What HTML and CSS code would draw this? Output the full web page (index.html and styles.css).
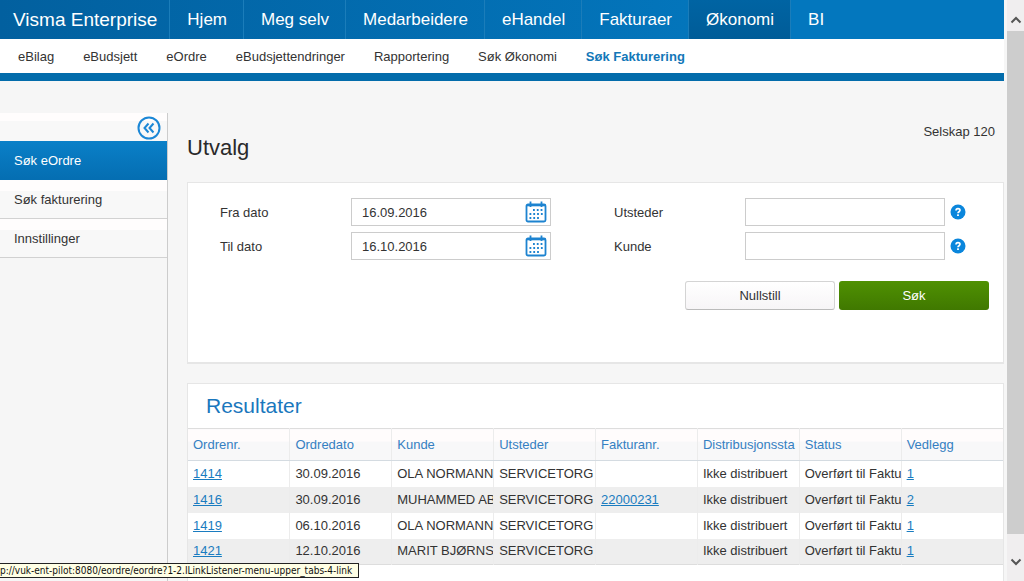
FILE: index.html
```html
<!DOCTYPE html>
<html lang="no">
<head>
<meta charset="utf-8">
<meta name="viewport" content="width=device-width, initial-scale=1">
<title>Visma Enterprise</title>
<link rel="stylesheet" href="styles.css">
</head>
<body>
<svg class="sprite" aria-hidden="true">
  <symbol id="calendar" viewBox="0 0 22 22">
    <rect x="1.500" y="3.500" width="19" height="17" rx="1.500" fill="none" stroke="currentColor" stroke-width="1.800"/>
    <path d="M1.500 4.500H20.500" stroke="currentColor" stroke-width="1.600"/>
    <path d="M5.500 0.500V6M16.500 0.500V6" stroke="currentColor" stroke-width="1.800"/>
    <path d="M8 9H18M4.500 13H18M4.500 17H14.500" stroke="currentColor" stroke-width="1.800" stroke-dasharray="1.800 2"/>
  </symbol>
  <symbol id="help" viewBox="0 0 16 16">
    <circle cx="8" cy="8" r="7.500" fill="#0a86dc"/>
    <path d="M6 6.600C6 4 10 4 10 6.300C10 7.800 8 7.600 8 9.300" fill="none" stroke="#fff" stroke-width="1.700"/>
    <rect x="7.100" y="10.300" width="1.800" height="1.700" fill="#fff"/>
  </symbol>
</svg>
<div class="window">
  <div class="page">
    <header>
      <nav class="topnav">
        <a class="brand" href="#">Visma Enterprise</a>
        <a href="#">Hjem</a>
        <a href="#">Meg selv</a>
        <a href="#">Medarbeidere</a>
        <a href="#">eHandel</a>
        <a href="#">Fakturaer</a>
        <a class="current" href="#">Økonomi</a>
        <a class="last" href="#">BI</a>
      </nav>
      <nav class="subnav">
        <a href="#">eBilag</a>
        <a href="#">eBudsjett</a>
        <a href="#">eOrdre</a>
        <a href="#">eBudsjettendringer</a>
        <a href="#">Rapportering</a>
        <a href="#">Søk Økonomi</a>
        <a class="current" href="#">Søk Fakturering</a>
      </nav>
    </header>
    <div class="body">
      <aside class="sidebar">
        <div class="collapse">
          <button type="button" aria-label="Skjul meny">
            <svg viewBox="0 0 24 24" fill="none" stroke="#1b87d6" stroke-width="2">
              <circle cx="12" cy="12" r="10.500"/>
              <path d="M11.500 7.500L7.500 12L11.500 16.500M16.500 7.500L12.500 12L16.500 16.500"/>
            </svg>
          </button>
        </div>
        <a class="current" href="#">Søk eOrdre</a>
        <a href="#">Søk fakturering</a>
        <a href="#">Innstillinger</a>
      </aside>
      <main>
        <p class="company">Selskap 120</p>
        <h1>Utvalg</h1>
        <form class="panel filter">
          <div class="fields">
            <div class="column">
              <div class="field">
                <label for="from">Fra dato</label>
                <div class="date"><input id="from" type="text" value="16.09.2016"><button type="button" aria-label="Velg fra dato"><svg><use href="#calendar"/></svg></button></div>
              </div>
              <div class="field">
                <label for="to">Til dato</label>
                <div class="date"><input id="to" type="text" value="16.10.2016"><button type="button" aria-label="Velg til dato"><svg><use href="#calendar"/></svg></button></div>
              </div>
            </div>
            <div class="column">
              <div class="field">
                <label for="issuer">Utsteder</label>
                <input class="text" id="issuer" type="text">
                <button class="help" type="button" aria-label="Hjelp om utsteder"><svg><use href="#help"/></svg></button>
              </div>
              <div class="field">
                <label for="customer">Kunde</label>
                <input class="text" id="customer" type="text">
                <button class="help" type="button" aria-label="Hjelp om kunde"><svg><use href="#help"/></svg></button>
              </div>
            </div>
          </div>
          <div class="actions">
            <button class="reset" type="reset">Nullstill</button>
            <button class="search" type="submit">Søk</button>
          </div>
        </form>
        <section class="panel results">
          <h2>Resultater</h2>
          <table>
            <thead>
              <tr><th>Ordrenr.</th><th>Ordredato</th><th>Kunde</th><th>Utsteder</th><th>Fakturanr.</th><th>Distribusjonssta</th><th>Status</th><th>Vedlegg</th></tr>
            </thead>
            <tbody>
              <tr><td><a href="#">1414</a></td><td>30.09.2016</td><td>OLA NORMANN</td><td>SERVICETORG</td><td></td><td>Ikke distribuert</td><td>Overført til Faktu</td><td><a href="#">1</a></td></tr>
              <tr><td><a href="#">1416</a></td><td>30.09.2016</td><td>MUHAMMED AB</td><td>SERVICETORG</td><td><a href="#">22000231</a></td><td>Ikke distribuert</td><td>Overført til Faktu</td><td><a href="#">2</a></td></tr>
              <tr><td><a href="#">1419</a></td><td>06.10.2016</td><td>OLA NORMANN</td><td>SERVICETORG</td><td></td><td>Ikke distribuert</td><td>Overført til Faktu</td><td><a href="#">1</a></td></tr>
              <tr><td><a href="#">1421</a></td><td>12.10.2016</td><td>MARIT BJØRNS</td><td>SERVICETORG</td><td></td><td>Ikke distribuert</td><td>Overført til Faktu</td><td><a href="#">1</a></td></tr>
            </tbody>
          </table>
        </section>
      </main>
    </div>
  </div>
  <div class="scrollbar">
    <button type="button" aria-label="Rull opp"><svg viewBox="0 0 12 8"><path d="M1.500 6.500L6 2L10.500 6.500"/></svg></button>
    <div class="thumb"></div>
    <button class="down" type="button" aria-label="Rull ned"><svg viewBox="0 0 12 8"><path d="M1.500 1.500L6 6L10.500 1.500"/></svg></button>
  </div>
</div>
<div class="link-target">p://vuk-ent-pilot:8080/eordre/eordre?1-2.ILinkListener-menu-upper_tabs-4-link</div>
</body>
</html>
```
FILE: styles.css
```css
* { box-sizing: border-box; }

body {
  margin: 0;
  background: #f6f6f6;
  color: #333;
  font: 13px/16px "Liberation Sans", Arial, sans-serif;
}

a { color: inherit; text-decoration: none; }
button, input { font: inherit; color: inherit; }
button { padding: 0; border: 0; background: none; cursor: pointer; }
svg { display: block; }
.sprite { display: none; }

.window { display: flex; height: 100vh; overflow: hidden; }
.page { flex: 1; min-width: 0; display: flex; flex-direction: column; }

.topnav {
  display: flex;
  height: 39px;
  background: linear-gradient(90deg, #02609f 0%, #0377be 75%);
  color: #fff;
  font-size: 17px;
  line-height: 39px;
}
.topnav a { padding: 0 16px 0 17px; border-right: 1px solid #1b7dba; }
.topnav .brand { padding: 0 12px 0 13px; font-size: 19px; }
.topnav .current { background: linear-gradient(#0064a3, #005c98); }
.topnav .last { border-right: 0; }

.subnav {
  display: flex;
  gap: 29px;
  padding: 1px 18px 0;
  background: #fff;
  border-bottom: 8px solid #036cab;
  line-height: 33px;
}
.subnav .current { color: #1277b8; font-weight: bold; }

.body { flex: 1; display: flex; min-height: 0; padding-top: 32px; }

.sidebar { flex: 0 0 168px; border-right: 1px solid #ccc; }
.collapse {
  display: flex;
  justify-content: flex-end;
  height: 28px;
  padding: 3px 6px 0 0;
  background: linear-gradient(#fffdfd 0 8px, #f8f8f8 8px);
}
.collapse button { width: 24px; height: 24px; }
.sidebar a {
  display: block;
  padding: 12px 14px 10px;
  border-bottom: 1px solid #d2d2d2;
  background: linear-gradient(#fffdfd 0 11px, #f8f8f8 11px);
}
.sidebar .current {
  background: linear-gradient(#0a80c8, #056eb2);
  border-color: #056eb2;
  color: #fff;
}

main { flex: 1; min-width: 0; padding-left: 19px; display: flex; flex-direction: column; }
.company { margin: 0; padding: 11px 9px 0 0; text-align: right; }
h1, h2 { margin: 0; font-weight: normal; }
h1 { font-size: 22px; line-height: 24px; padding-bottom: 22px; margin-top: -4px; color: #2a2a2a; }

.panel { background: #fff; border: 1px solid #e6e6e6; }
.filter { flex: none; padding: 15px 14px 52px 32px; border-bottom-width: 2px; }
.fields { display: flex; gap: 63px; }
.column { display: flex; flex-direction: column; gap: 6px; }
.field { display: flex; align-items: center; }
.field label { width: 131px; line-height: 18px; padding-top: 1px; }
.date, .text { width: 200px; height: 28px; border: 1px solid #ccc; background: #fff; }
.date { display: flex; align-items: center; padding: 0 3px 0 10px; }
.date input { flex: 1; min-width: 0; padding: 1px 0 0; border: 0; background: none; }
.date button { color: #1d83d0; }
.date svg { width: 22px; height: 22px; }
.help { margin-left: 5px; }
.help svg { width: 16px; height: 16px; }
.actions { display: flex; justify-content: flex-end; gap: 4px; margin-top: 21px; }
.actions button { width: 150px; height: 29px; border-radius: 3px; }
.reset {
  border: 1px solid #d4d4d4;
  border-bottom-color: #bbb;
  background: linear-gradient(#fff, #f7f5f7);
}
.search { background: linear-gradient(#4f9102, #407800); color: #fff; }

.results { flex: 1; margin-top: 19px; border-bottom: 0; }
h2 { padding: 8px 18px; font-size: 21px; line-height: 28px; color: #1a77bd; }
table { width: 100%; table-layout: fixed; border-collapse: collapse; border-bottom: 1px solid #ddd; }
th, td {
  height: 26px;
  padding: 0 0 0 5px;
  overflow: hidden;
  white-space: nowrap;
  text-align: left;
  font-weight: normal;
  border-right: 1px solid #ececec;
}
th:last-child, td:last-child { border-right: 0; }
th {
  height: 32px;
  color: #3580c2;
  background: linear-gradient(#fffcfc 0 12px, #f8f8f9 12px);
  border-top: 1px solid #ddd;
  border-bottom: 1px solid #d4dbe1;
}
tbody tr:nth-child(even) { background: #eee; }
td a { color: #1a7cc0; text-decoration: underline; }

.scrollbar {
  flex: 0 0 17px;
  margin-left: 3px;
  display: flex;
  flex-direction: column;
  background: #f0eeef;
}
.scrollbar button { height: 31px; padding: 8px 2px 0; }
.scrollbar .down { height: 47px; padding: 8px 2px 0; }
.scrollbar svg { width: 12px; height: 8px; margin: auto; fill: none; stroke: #555; stroke-width: 2; }
.thumb { flex: 1; background: #cdcdcd; }

.link-target {
  position: fixed;
  left: 0;
  bottom: 3px;
  padding: 0 6px 0 0;
  border: 1px solid #222;
  border-left: 0;
  background: #ffffe5;
  color: #111;
  font: 10px/13px "DejaVu Sans Condensed", "Noto Sans", sans-serif;
  white-space: nowrap;
}
```
